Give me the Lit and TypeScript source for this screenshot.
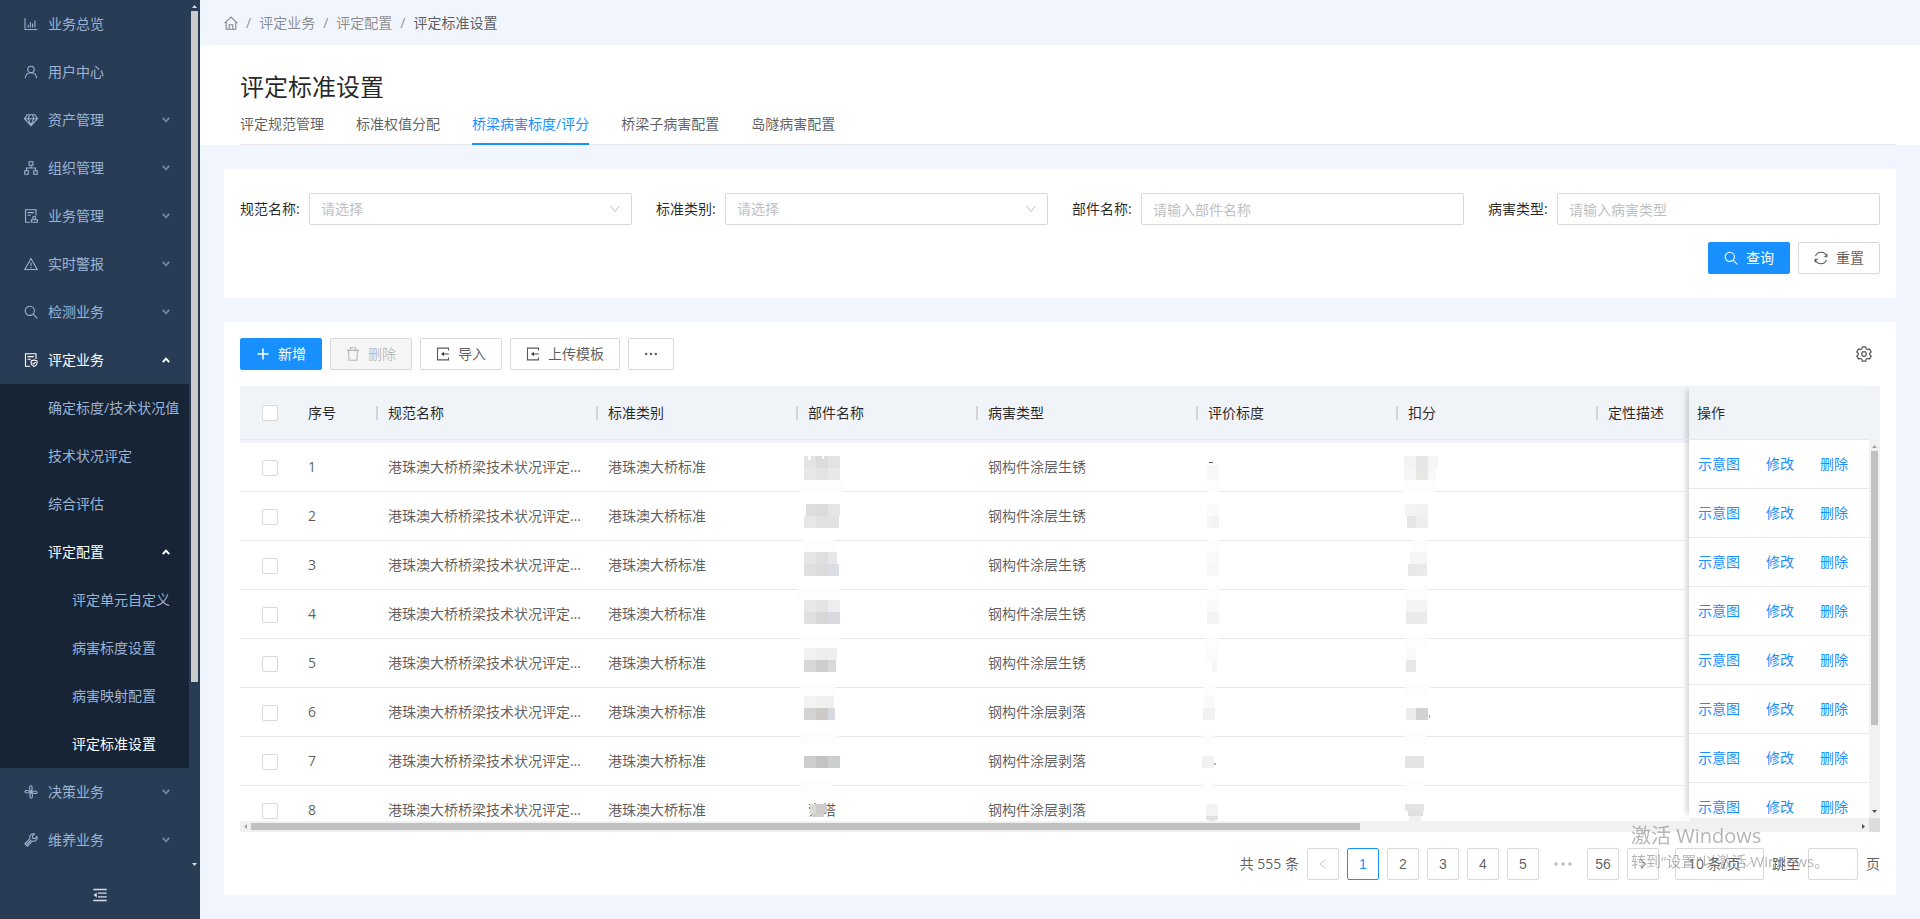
import { LitElement, html, css, svg, nothing } from "lit";
import { customElement, property, state } from "lit/decorators.js";
import { classMap } from "lit/directives/class-map.js";

const baseStyles = css`
  *,
  *::before,
  *::after {
    box-sizing: border-box;
  }
  button,
  input,
  select {
    font: inherit;
    color: inherit;
    margin: 0;
  }
  a {
    color: inherit;
    text-decoration: none;
  }
  button {
    cursor: pointer;
  }
`;

const ICONS: Record<string, unknown> = {
  chart: svg`<path d="M1 1.2v11.3h12.3M4.2 10.5V7.8M6.4 10.5V5.2M8.6 10.5V6.6M10.9 10.5V3.6"/>`,
  user: svg`<circle cx="7" cy="4.4" r="3.2"/><path d="M1.3 13.2c.2-3.2 2.4-5.5 5.7-5.5s5.500 2.300 5.700 5.500"/>`,
  gem: svg`<path d="M3.200 1.800h7.600L13.500 5.700 7 12.600.5 5.700zM.5 5.700h13M4.300 5.700 7 12.300l2.700-6.600M4.300 5.700 5.300 1.800M9.700 5.700 8.700 1.800"/>`,
  org: svg`<path d="M5.100.8h3.800v3.500H5.100zM.7 9.700h3.600v3.500H.7zM9.700 9.700h3.600v3.500H9.700zM7 4.300V7M2.500 9.700V7h9v2.700"/>`,
  audit: svg`<path d="M12 6.500V.8H1.500v12.400h4.200M3.500 3.600h6.400M3.500 6.200h3.200M8.900 10.800h4.500v2.400H7.300v-2.400z"/><circle cx="10.200" cy="8.700" r="1.500"/>`,
  warning: svg`<path d="M7 1.500.8 12.500h12.400zM7 5.500v3.600M7 10v1.200"/>`,
  search: svg`<circle cx="5.800" cy="5.800" r="4.600"/><path d="m9.200 9.200 4.100 4.100"/>`,
  review: svg`<path d="M12 6V.8H1.500v12.400h4.700M3.500 3.600h6.400M3.500 6.200h3.400M10.100 6.900l2.900 1v2.700c0 1.300-1.300 2.100-2.900 2.800-1.600-.7-2.900-1.500-2.900-2.800V7.900zM8.700 9.900l1.100 1.100 1.900-1.900"/>`,
  fan: svg`<path d="M7 7C5.200 5 5 1 6.800.8 8.600.6 8.500 4 7 7zM7 7c2-1.400 5.900-1.500 6.100.2.200 1.900-3.500 1.800-6.100-.2zM7 7c1.800 2 2 6 .2 6.200C5.400 13.400 5.500 10 7 7zM7 7C5 8.400 1.100 8.500.9 6.800.7 4.900 4.400 5 7 7z"/>`,
  tool: svg`<path d="M12.900 3.500 10.800 5.600 8.700 5.200 8.300 3.200 10.400 1.100C8.800.6 7.300 1 6.400 2.200c-.8 1-.9 2.200-.5 3.400L.9 10.800l2.400 2.400 5.100-5.100c1.200.4 2.500.2 3.500-.7 1.100-1 1.500-2.500 1-3.900zM2.600 11.500 7.200 7"/>`,
  home: svg`<path d="M.6 7.200 7 1l6.400 6.200M2.200 6v7.200h9.600V6M5.200 13V8.700h3.600V13"/>`,
  plus: svg`<path stroke-width="1.500" d="M7 1.500v11M1.500 7h11"/>`,
  trash: svg`<path d="M.9 3.400h12.200M2.500 3.400l.6 9.800h7.800l.6-9.800M4.400 3.400V.8h5.200v2.600"/>`,
  enter: svg`<path d="M12.500 3.400V1.100h-11v11.800h11v-2.300"/><path d="M12.800 7H6.500"/><path fill="currentColor" stroke="none" d="M8 4.700v4.600L4.900 7z"/>`,
  reload: svg`<path d="M12.700 5.600C12 3.100 9.800 1.300 7 1.300c-2.600 0-4.700 1.500-5.500 3.900M1.300 8.400c.7 2.500 2.900 4.300 5.700 4.300 2.600 0 4.700-1.500 5.500-3.900M12.900 2.700v3h-2.700M1.100 11.300v-3h2.700"/>`,
  more: svg`<g fill="currentColor" stroke="none"><circle cx="2.200" cy="7" r="1.200"/><circle cx="7" cy="7" r="1.200"/><circle cx="11.800" cy="7" r="1.200"/></g>`,
  down: svg`<path d="m2 3.500 5 6.500 5-6.500"/>`,
  left: svg`<path d="M9.600 2 3.800 7l5.800 5"/>`,
  right: svg`<path d="m4.400 2 5.800 5-5.800 5"/>`,
  setting: svg`<circle cx="7" cy="7" r="2"/><path d="M5.600.7h2.800l.5 1.800 1.200.7 1.800-.5 1.400 2.400L12 6.400v1.200l1.300 1.300-1.400 2.400-1.800-.5-1.200.7-.5 1.800H5.600l-.5-1.800-1.200-.7-1.800.5L.7 8.900 2 7.600V6.400L.7 5.100l1.400-2.400 1.800.5 1.200-.7z"/>`,
  fold: svg`<path stroke-width="1.300" d="M.3 1.500h13.400M5 5.200h8.700M5 8.800h8.700M.3 12.500h13.400"/><path fill="currentColor" stroke="none" d="M3.800 4.400v5.200L.5 7z"/>`,
};

@customElement("ui-icon")
class UiIcon extends LitElement {
  @property() name = "";
  static styles = css`
    :host {
      display: inline-flex;
      flex: none;
      width: 14px;
      height: 14px;
    }
    svg {
      width: 100%;
      height: 100%;
      display: block;
      overflow: visible;
    }
  `;
  render() {
    return html`<svg viewBox="0 0 14 14" fill="none" stroke="currentColor" stroke-width="1.1" aria-hidden="true">${ICONS[this.name] ?? nothing}</svg>`;
  }
}

interface MenuEntry {
  text: string;
  icon?: string;
  level: number;
  children?: MenuEntry[];
  open?: boolean;
  active?: boolean;
  group?: boolean;
}

const MENU: MenuEntry[] = [
  { text: "业务总览", icon: "chart", level: 0 },
  { text: "用户中心", icon: "user", level: 0 },
  { text: "资产管理", icon: "gem", level: 0, group: true },
  { text: "组织管理", icon: "org", level: 0, group: true },
  { text: "业务管理", icon: "audit", level: 0, group: true },
  { text: "实时警报", icon: "warning", level: 0, group: true },
  { text: "检测业务", icon: "search", level: 0, group: true },
  {
    text: "评定业务", icon: "review", level: 0, group: true, open: true, active: true,
    children: [
      { text: "确定标度/技术状况值", level: 1 },
      { text: "技术状况评定", level: 1 },
      { text: "综合评估", level: 1 },
      {
        text: "评定配置", level: 1, group: true, open: true, active: true,
        children: [
          { text: "评定单元自定义", level: 2 },
          { text: "病害标度设置", level: 2 },
          { text: "病害映射配置", level: 2 },
          { text: "评定标准设置", level: 2, active: true },
        ],
      },
    ],
  },
  { text: "决策业务", icon: "fan", level: 0, group: true },
  { text: "维养业务", icon: "tool", level: 0, group: true },
];

@customElement("side-menu")
class SideMenu extends LitElement {
  static styles = [
    baseStyles,
    css`
      :host {
        display: flex;
        flex-direction: column;
        width: 200px;
        flex: none;
        background: #293c55;
        color: #9db3d3;
      }
      .scroll {
        flex: 1;
        min-height: 0;
        display: flex;
      }
      nav {
        flex: 1;
        overflow: hidden;
      }
      ul {
        list-style: none;
        margin: 0;
        padding: 0;
      }
      .sub {
        background: #162436;
      }
      .item {
        display: flex;
        align-items: center;
        gap: 10px;
        width: 100%;
        height: 48px;
        padding: 0 19px 0 24px;
        border: 0;
        background: none;
        text-align: left;
        white-space: nowrap;
      }
      .level1 {
        padding-left: 48px;
      }
      .level2 {
        padding-left: 72px;
      }
      .active {
        color: #fff;
      }
      .text {
        flex: 1;
      }
      .chevron {
        width: 8px;
        height: 6px;
        fill: none;
        stroke: #6f83a0;
        stroke-width: 2;
      }
      .chevron.open {
        stroke: #fff;
      }
      .bar {
        width: 11px;
        display: flex;
        flex-direction: column;
        align-items: center;
        padding: 5px 0;
        gap: 3px;
      }
      .track {
        flex: 1;
        width: 7px;
      }
      .thumb {
        height: 79%;
        background: #cbcbcb;
      }
      .arrow {
        width: 5px;
        height: 3px;
        fill: #dcdcdc;
        display: block;
      }
      .collapse {
        height: 48px;
        border: 0;
        background: none;
        color: #d5dce6;
        display: flex;
        align-items: center;
        justify-content: center;
      }
    `,
  ];

  private entry(m: MenuEntry): unknown {
    const cls = classMap({ item: true, level1: m.level === 1, level2: m.level === 2, active: !!m.active });
    const body = html`${m.icon ? html`<ui-icon name=${m.icon}></ui-icon>` : nothing}<span class="text">${m.text}</span>`;
    return html`<li>
      ${m.group
        ? html`<button class=${cls} aria-expanded=${m.open ? "true" : "false"}>
            ${body}
            <svg class="chevron ${m.open ? "open" : ""}" viewBox="0 0 8 6"><path d=${m.open ? "M.8 5.200 4 1.700l3.200 3.500" : "M.8.8 4 4.300 7.200.8"} /></svg>
          </button>`
        : html`<a class=${cls} href="#">${body}</a>`}
      ${m.children ? html`<ul class="sub">${m.children.map((c) => this.entry(c))}</ul>` : nothing}
    </li>`;
  }

  render() {
    return html`
      <div class="scroll">
        <nav><ul>${MENU.map((m) => this.entry(m))}</ul></nav>
        <div class="bar">
          <svg class="arrow" viewBox="0 0 5 3"><path d="M0 3 2.500 0 5 3z" /></svg>
          <div class="track"><div class="thumb"></div></div>
          <svg class="arrow" viewBox="0 0 5 3"><path d="M0 0h5L2.500 3z" /></svg>
        </div>
      </div>
      <button class="collapse" aria-label="收起菜单"><ui-icon name="fold"></ui-icon></button>
    `;
  }
}

/* Each block is [x, y, width, height, colour], measured from the cell's corner. */
type Block = [number, number, number, number, string];
const C = "#fdfdfd";

const PART_MASKS: Block[][] = [
  [[4, 13, 12, 12, "#e3e3e3"], [16, 13, 12, 12, "#dcdcdc"], [28, 13, 12, 12, "#e2e3e5"], [4, 25, 12, 12, "#e7e7e6"], [16, 25, 12, 12, "#e4e3e1"], [28, 25, 12, 12, "#e7e8eb"], [8, 13, 3, 4, "#fff"], [22, 13, 2, 3, "#fff"], [1, 37, 44, 12, C]],
  [[6, 12, 10, 12, "#dedede"], [16, 12, 12, 12, "#dbdbdb"], [28, 12, 12, 12, "#e4e5e6"], [4, 24, 12, 12, "#e7e7e7"], [16, 24, 12, 12, "#e3e2e1"], [28, 24, 11, 12, "#dfe3e4"]],
  [[2, -1, 32, 12, C], [4, 11, 12, 12, "#e6e6e6"], [16, 11, 12, 12, "#dfdfdf"], [28, 11, 9, 12, "#e7e7e8"], [4, 23, 12, 12, "#e0e0e0"], [16, 23, 12, 12, "#dcdbdb"], [28, 23, 11, 12, "#dbdee2"]],
  [[-2, -2, 42, 12, C], [4, 10, 12, 12, "#e8e8e8"], [16, 10, 12, 12, "#e3e3e3"], [28, 10, 12, 12, "#ecedef"], [4, 22, 12, 12, "#dfdfdf"], [16, 22, 12, 12, "#d9d7d6"], [28, 22, 12, 12, "#d7dade"]],
  [[1, -3, 38, 12, C], [4, 9, 12, 12, "#f1f1f1"], [16, 9, 12, 12, "#ededed"], [28, 9, 9, 12, "#eeefef"], [4, 21, 12, 12, "#d9d8d7"], [16, 21, 12, 12, "#cfcdcb"], [28, 21, 8, 12, "#d6dadd"]],
  [[1, -4, 34, 12, C], [4, 8, 12, 12, "#f3f3f3"], [16, 8, 18, 12, "#f0f0f0"], [4, 20, 12, 12, "#d3d3d2"], [16, 20, 12, 12, "#ccc9c6"], [28, 20, 7, 12, "#d6d9e0"]],
  [[1, -5, 37, 12, C], [4, 19, 12, 12, "#cdcdcd"], [16, 19, 12, 12, "#c5c3c2"], [28, 19, 12, 12, "#cbcfd0"]],
  [[1, -6, 31, 12, C], [10, 18, 6, 9, "#d9d9d9"], [16, 18, 11, 9, "#cdcbca"], [12, 27, 12, 4, "#d2d0cf"]],
];

const SCALE_MASKS: Block[][] = [
  [[9, 19, 4, 1, "#5c5c6a"], [7, 22, 12, 15, "#f8f8fa"], [7, 37, 12, 12, C]],
  [[7, 12, 12, 12, "#fafafa"], [7, 24, 5, 12, "#f6f6f6"], [12, 24, 7, 12, "#f3f3f4"]],
  [[7, -1, 12, 12, C], [7, 11, 12, 12, "#f9f9fa"], [7, 23, 12, 12, "#f7f7f9"]],
  [[7, -2, 12, 12, C], [7, 10, 12, 12, "#fafafc"], [7, 22, 12, 12, "#f5f4f5"]],
  [[6, -3, 12, 12, C], [6, 9, 12, 12, "#fbfbfd"], [12, 21, 5, 12, "#f5f5fa"]],
  [[3, -4, 12, 12, C], [3, 8, 12, 12, "#fafafa"], [3, 20, 12, 12, "#f2f1f1"]],
  [[2, -5, 12, 12, C], [2, 19, 12, 12, "#f2f1f1"], [14, 26, 2, 2, "#a9abbf"]],
  [[2, -6, 12, 12, C], [6, 18, 12, 12, "#f3f3f3"], [6, 30, 12, 4, "#e1e1e1"], [10, 34, 4, 4, "#e4e4e4"]],
];

const SCORE_MASKS: Block[][] = [
  [[4, 13, 12, 12, "#f3f3f3"], [16, 13, 12, 12, "#e6e6e6"], [28, 13, 10, 12, "#f6f6f6"], [28, 25, 8, 12, "#f8f8f8"], [4, 25, 12, 12, "#f6f6f6"], [16, 25, 12, 12, "#e7e7e3"], [2, 37, 33, 12, C]],
  [[5, 12, 11, 12, "#f4f4f4"], [16, 12, 12, 12, "#f1f1f1"], [7, 24, 9, 12, "#e5e7e7"], [16, 24, 12, 12, "#eeeeee"]],
  [[13, -1, 16, 12, C], [10, 11, 17, 12, "#f6f6f6"], [8, 23, 8, 12, "#e6e9e7"], [16, 23, 11, 12, "#eaeaea"]],
  [[6, -2, 21, 12, C], [6, 10, 21, 12, "#f4f4f4"], [6, 22, 21, 12, "#eaeaea"]],
  [[6, -3, 21, 12, C], [6, 9, 10, 12, "#f9f9f9"], [6, 21, 10, 12, "#e7e7e7"]],
  [[6, -4, 24, 12, C], [6, 20, 10, 12, "#ececee"], [16, 20, 12, 12, "#d2d2d0"], [29, 27, 1, 3, "#7fb3d3"]],
  [[5, -5, 21, 12, C], [5, 19, 19, 12, "#e4e4e4"]],
  [[5, -6, 19, 12, C], [5, 18, 19, 7, "#e2e3e3"], [8, 25, 15, 5, "#dfe0df"], [9, 30, 12, 8, "#f1f1f1"]],
];

const COLUMNS = ["规范名称", "标准类别", "部件名称", "病害类型", "评价标度", "扣分", "定性描述"];
const ROWS = Array.from({ length: 8 }, (_, i) => ({
  no: i + 1,
  spec: "港珠澳大桥桥梁技术状况评定标准",
  kind: "港珠澳大桥标准",
  part: i === 7 ? "索塔" : "",
  damage: i < 5 ? "钢构件涂层生锈" : "钢构件涂层剥落",
}));

@customElement("standard-table")
class StandardTable extends LitElement {
  static styles = [
    baseStyles,
    css`
      :host {
        display: grid;
        grid-template-columns: minmax(0, 1fr) 180px 11px;
        grid-template-rows: minmax(0, 1fr) 3px 11px;
      }
      .left {
        grid-row: 1 / 3;
        overflow: hidden;
      }
      table {
        border-collapse: separate;
        border-spacing: 0;
        table-layout: fixed;
      }
      .data {
        width: 2360px;
      }
      .fixed {
        width: 100%;
      }
      .w60 { width: 60px; }
      .w80 { width: 80px; }
      .w180 { width: 180px; }
      .w200 { width: 200px; }
      .w220 { width: 220px; }
      th,
      td {
        padding: 0 8px;
        font-weight: 400;
        text-align: left;
        white-space: nowrap;
      }
      th {
        background: #f0f3f8;
        color: rgba(0, 0, 0, 0.85);
        padding: 0;
      }
      .head {
        position: relative;
        height: 54px;
        padding: 0 8px;
        line-height: 53px;
        border-bottom: 1px solid #e6e8eb;
      }
      .data .head {
        margin-bottom: 3px;
      }
      .split::after {
        content: "";
        position: absolute;
        right: 2px;
        top: 20px;
        width: 2px;
        height: 14px;
        background: #d2d4d8;
      }
      td {
        position: relative;
        height: 49px;
        border-bottom: 1px solid #e8e8e8;
      }
      .clip {
        overflow: hidden;
        text-overflow: ellipsis;
        padding-right: 14px;
      }
      .tick {
        text-align: center;
      }
      .head.tick {
        display: flex;
        align-items: center;
        justify-content: center;
      }
      .tick input {
        appearance: none;
        display: block;
        width: 16px;
        height: 16px;
        margin: 1px auto 0;
        border: 1px solid #d9d9d9;
        border-radius: 2px;
        background: #fff;
      }
      .mask {
        position: absolute;
        left: 0;
        top: 0;
        width: 48px;
        height: 49px;
        overflow: visible;
        shape-rendering: crispEdges;
      }
      .right {
        grid-column: 2;
        grid-row: 1;
        overflow: hidden;
        background: #fff;
      }
      .pin {
        grid-column: 2;
        grid-row: 1;
        box-shadow: -6px 0 6px -4px rgba(0, 0, 0, 0.2);
      }
      .links {
        display: flex;
        gap: 26px;
        padding-left: 1px;
        color: #1890ff;
      }
      .vside {
        grid-column: 3;
        grid-row: 1;
        display: flex;
        flex-direction: column;
      }
      .cap {
        height: 54px;
        background: #f0f3f8;
      }
      .vbar {
        flex: 1;
        background: #f1f1f1;
        display: flex;
        flex-direction: column;
        align-items: center;
        padding: 5px 0;
        gap: 3px;
      }
      .vtrack {
        flex: 1;
        width: 7px;
      }
      .vthumb {
        height: 77%;
        background: #c1c1c1;
      }
      .gap {
        grid-column: 2;
        grid-row: 2;
        background: #f1f1f1;
      }
      .hbar {
        grid-column: 1 / 3;
        grid-row: 3;
        background: #f1f1f1;
        display: flex;
        align-items: center;
        padding: 0 4px;
        gap: 4px;
      }
      .htrack {
        flex: 1;
        height: 7px;
      }
      .hthumb {
        height: 7px;
        width: 69%;
        background: #c1c1c1;
      }
      .corner {
        grid-column: 3;
        grid-row: 2 / 4;
        background: #dcdcdc;
      }
      .tri {
        display: block;
        fill: #505050;
      }
      .dim {
        fill: #a3a3a3;
      }
      .h {
        width: 5px;
        height: 3px;
      }
      .v {
        width: 3px;
        height: 5px;
      }
    `,
  ];

  private mask(blocks: Block[]) {
    return html`<svg class="mask" aria-hidden="true">
      ${blocks.map(([x, y, w, h, c]) => svg`<rect x=${x} y=${y} width=${w} height=${h} fill=${c}></rect>`)}
    </svg>`;
  }

  render() {
    return html`
      <div class="left">
        <table class="data">
          <colgroup>
            <col class="w60" /><col class="w80" /><col class="w220" /><col class="w200" /><col class="w180" />
            <col class="w220" /><col class="w200" /><col class="w200" /><col />
          </colgroup>
          <thead>
            <tr>
              <th><div class="head tick"><input type="checkbox" aria-label="全选" /></div></th>
              <th><div class="head split">序号</div></th>
              ${COLUMNS.map((c) => html`<th><div class="head split">${c}</div></th>`)}
            </tr>
          </thead>
          <tbody>
            ${ROWS.map(
              (r, i) => html`<tr>
                <td class="tick"><input type="checkbox" aria-label="选择第${r.no}行" /></td>
                <td>${r.no}</td>
                <td class="clip">${r.spec}</td>
                <td>${r.kind}</td>
                <td>${r.part}${this.mask(PART_MASKS[i])}</td>
                <td>${r.damage}</td>
                <td>${this.mask(SCALE_MASKS[i])}</td>
                <td>${this.mask(SCORE_MASKS[i])}</td>
                <td></td>
              </tr>`
            )}
          </tbody>
        </table>
      </div>
      <div class="pin"></div>
      <div class="right">
        <table class="fixed">
          <thead>
            <tr><th><div class="head">操作</div></th></tr>
          </thead>
          <tbody>
            ${ROWS.map(() => html`<tr><td><div class="links"><a href="#">示意图</a><a href="#">修改</a><a href="#">删除</a></div></td></tr>`)}
          </tbody>
        </table>
      </div>
      <div class="vside">
        <div class="cap"></div>
        <div class="vbar">
          <svg class="tri h dim" viewBox="0 0 5 3"><path d="M0 3 2.500 0 5 3z" /></svg>
          <div class="vtrack"><div class="vthumb"></div></div>
          <svg class="tri h" viewBox="0 0 5 3"><path d="M0 0h5L2.500 3z" /></svg>
        </div>
      </div>
      <div class="gap"></div>
      <div class="hbar">
        <svg class="tri v dim" viewBox="0 0 3 5"><path d="M3 0v5L0 2.500z" /></svg>
        <div class="htrack"><div class="hthumb"></div></div>
        <svg class="tri v" viewBox="0 0 3 5"><path d="M0 0v5l3-2.500z" /></svg>
      </div>
      <div class="corner"></div>
    `;
  }
}

const TABS = ["评定规范管理", "标准权值分配", "桥梁病害标度/评分", "桥梁子病害配置", "岛隧病害配置"];

@customElement("app-root")
class AppRoot extends LitElement {
  @state() private tab = 2;

  static styles = [
    baseStyles,
    css`
      :host {
        display: flex;
        height: 100vh;
        overflow: hidden;
        font-family: "Open Sans", "Noto Sans CJK SC", sans-serif;
        font-size: 14px;
        line-height: 22px;
        color: rgba(0, 0, 0, 0.65);
        background: #f1f5fd;
      }
      main {
        flex: 1;
        min-width: 0;
        display: flex;
        flex-direction: column;
      }
      .crumbs {
        display: flex;
        align-items: center;
        gap: 8px;
        height: 45px;
        padding: 0 24px;
        color: rgba(0, 0, 0, 0.45);
      }
      .crumbs a {
        display: flex;
      }
      .here {
        color: rgba(0, 0, 0, 0.65);
      }
      .top {
        background: #fff;
        padding: 26px 24px 0 40px;
      }
      h1 {
        margin: 0;
        font-size: 24px;
        line-height: 32px;
        font-weight: 400;
        color: rgba(0, 0, 0, 0.85);
      }
      .tabs {
        display: flex;
        gap: 32px;
        height: 42px;
        box-shadow: inset 0 -1px #e8e8e8;
      }
      .tab {
        border: 0;
        background: none;
        padding: 2px 0 0;
        border-bottom: 2px solid transparent;
      }
      .on {
        color: #1890ff;
        border-bottom-color: #1890ff;
      }
      .card {
        background: #fff;
        margin: 24px 24px 0;
      }
      .filter {
        padding: 24px 16px;
        display: flex;
        flex-direction: column;
        gap: 17px;
      }
      .fields {
        display: grid;
        grid-template-columns: repeat(4, minmax(0, 1fr));
        gap: 24px;
      }
      .field {
        display: flex;
        align-items: center;
      }
      .field label {
        width: 69px;
        flex: none;
        white-space: nowrap;
        color: rgba(0, 0, 0, 0.85);
      }
      .box {
        flex: 1;
        min-width: 0;
        position: relative;
        display: flex;
      }
      .control {
        width: 100%;
        height: 32px;
        border: 1px solid #d9d9d9;
        border-radius: 2px;
        padding: 0 11px;
        background: #fff;
        appearance: none;
        outline: 0;
      }
      select.hint {
        color: #bfbfbf;
      }
      .control::placeholder {
        color: #bfbfbf;
      }
      .caret {
        position: absolute;
        right: 11px;
        top: 10px;
        width: 12px;
        height: 12px;
        color: #bfbfbf;
        pointer-events: none;
      }
      .actions {
        display: flex;
        justify-content: flex-end;
        gap: 8px;
      }
      .btn {
        display: flex;
        align-items: center;
        gap: 8px;
        height: 32px;
        padding: 0 15px;
        border: 1px solid #d9d9d9;
        border-radius: 2px;
        background: #fff;
        box-shadow: 0 2px 0 rgba(0, 0, 0, 0.015);
        white-space: nowrap;
      }
      .primary {
        background: #1890ff;
        border-color: #1890ff;
        color: #fff;
      }
      .btn:disabled {
        background: #f5f5f5;
        color: rgba(0, 0, 0, 0.25);
      }
      .listing {
        flex: 1;
        min-height: 0;
        margin-bottom: 24px;
        padding: 16px 16px 15px;
        display: flex;
        flex-direction: column;
        gap: 16px;
      }
      .toolbar {
        display: flex;
        gap: 8px;
      }
      .gear {
        margin-left: auto;
        width: 32px;
        height: 32px;
        border: 0;
        padding: 0;
        background: none;
        display: flex;
        align-items: center;
        justify-content: center;
      }
      .gear ui-icon {
        width: 16px;
        height: 16px;
      }
      standard-table {
        flex: 1;
        min-height: 0;
      }
      .pager {
        display: flex;
        align-items: center;
        justify-content: flex-end;
        gap: 8px;
        white-space: nowrap;
      }
      .page {
        width: 32px;
        height: 32px;
        padding: 0;
        border: 1px solid #d9d9d9;
        border-radius: 2px;
        background: #fff;
        font-family: "Liberation Sans", sans-serif;
        display: flex;
        align-items: center;
        justify-content: center;
      }
      .page ui-icon {
        width: 12px;
        height: 12px;
      }
      .page:disabled {
        color: rgba(0, 0, 0, 0.25);
      }
      .current {
        border-color: #1890ff;
        color: #1890ff;
      }
      .dots {
        width: 32px;
        display: flex;
        justify-content: center;
        color: rgba(0, 0, 0, 0.25);
      }
      .dots ui-icon {
        width: 20px;
        height: 20px;
      }
      .size {
        position: relative;
        margin-left: 8px;
        width: 89px;
      }
      .size .control {
        padding: 0 12px;
        display: block;
      }
      .jump {
        width: 50px;
      }
      .watermark {
        position: fixed;
        right: 92px;
        bottom: 46px;
        width: 197px;
        color: rgba(120, 120, 120, 0.55);
        white-space: nowrap;
        pointer-events: none;
      }
      .big {
        font-size: 20px;
        line-height: 26px;
      }
      .small {
        font-size: 15px;
        line-height: 24px;
      }
    `,
  ];

  private select(id: string, label: string) {
    return html`<div class="field">
      <label for=${id}>${label}:</label>
      <div class="box">
        <select id=${id} class="control hint"><option>请选择</option></select>
        <ui-icon class="caret" name="down"></ui-icon>
      </div>
    </div>`;
  }

  private input(id: string, label: string) {
    return html`<div class="field">
      <label for=${id}>${label}:</label>
      <div class="box"><input id=${id} class="control" type="text" placeholder="请输入${label}" /></div>
    </div>`;
  }

  render() {
    return html`
      <side-menu></side-menu>
      <main>
        <nav class="crumbs" aria-label="面包屑">
          <a href="#" aria-label="首页"><ui-icon name="home"></ui-icon></a><span>/</span>
          <a href="#">评定业务</a><span>/</span><a href="#">评定配置</a><span>/</span>
          <span class="here">评定标准设置</span>
        </nav>
        <header class="top">
          <h1>评定标准设置</h1>
          <div class="tabs" role="tablist">
            ${TABS.map(
              (t, i) => html`<button role="tab" aria-selected=${i === this.tab ? "true" : "false"}
                class=${classMap({ tab: true, on: i === this.tab })} @click=${() => (this.tab = i)}>${t}</button>`
            )}
          </div>
        </header>
        <form class="card filter" @submit=${(e: Event) => e.preventDefault()}>
          <div class="fields">
            ${this.select("spec", "规范名称")} ${this.select("kind", "标准类别")}
            ${this.input("part", "部件名称")} ${this.input("damage", "病害类型")}
          </div>
          <div class="actions">
            <button class="btn primary" type="submit"><ui-icon name="search"></ui-icon>查询</button>
            <button class="btn" type="reset"><ui-icon name="reload"></ui-icon>重置</button>
          </div>
        </form>
        <section class="card listing">
          <div class="toolbar">
            <button class="btn primary"><ui-icon name="plus"></ui-icon>新增</button>
            <button class="btn" disabled><ui-icon name="trash"></ui-icon>删除</button>
            <button class="btn"><ui-icon name="enter"></ui-icon>导入</button>
            <button class="btn"><ui-icon name="enter"></ui-icon>上传模板</button>
            <button class="btn" aria-label="更多"><ui-icon name="more"></ui-icon></button>
            <button class="gear" aria-label="设置"><ui-icon name="setting"></ui-icon></button>
          </div>
          <standard-table></standard-table>
          <div class="pager">
            <span>共 555 条</span>
            <button class="page" disabled aria-label="上一页"><ui-icon name="left"></ui-icon></button>
            ${[1, 2, 3, 4, 5].map((n) => html`<button class=${classMap({ page: true, current: n === 1 })}>${n}</button>`)}
            <span class="dots"><ui-icon name="more"></ui-icon></span>
            <button class="page">56</button>
            <button class="page" aria-label="下一页"><ui-icon name="right"></ui-icon></button>
            <div class="size">
              <select class="control" aria-label="每页条数"><option>10 条/页</option></select>
              <ui-icon class="caret" name="down"></ui-icon>
            </div>
            <label for="jump">跳至</label>
            <input id="jump" class="control jump" type="text" />
            <span>页</span>
          </div>
        </section>
      </main>
      <div class="watermark">
        <div class="big">激活 Windows</div>
        <div class="small">转到“设置”以激活 Windows。</div>
      </div>
    `;
  }
}
